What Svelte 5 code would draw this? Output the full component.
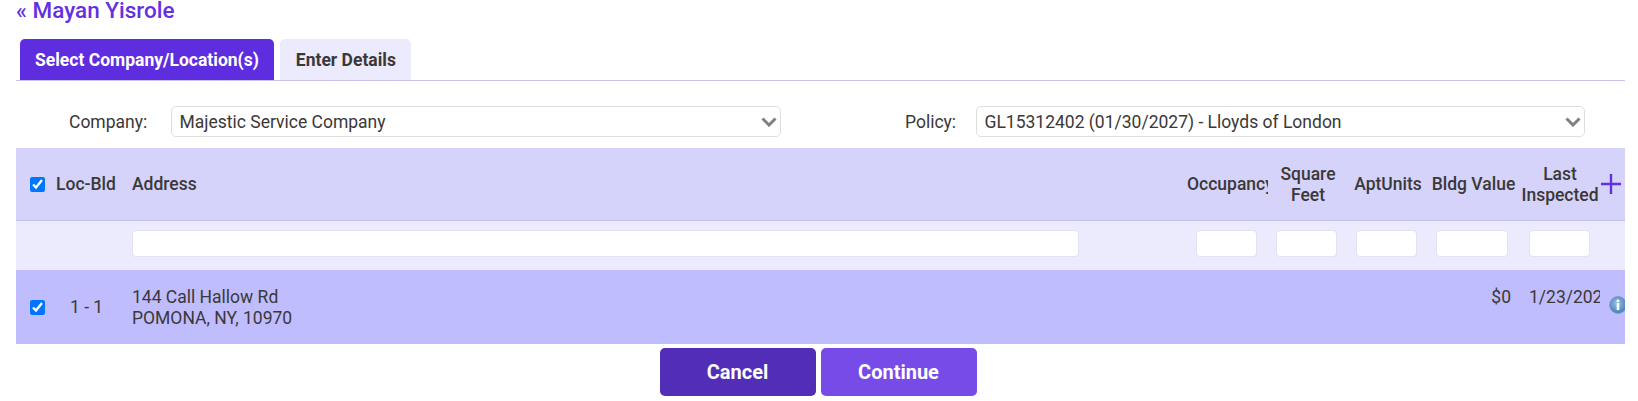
<script>
	const columns = [40, 76, 1055, 81, 80, 80, 88, 84, 25];
	const filters = [
		{ width: 61, left: 9 },
		{ width: 61, left: 8 },
		{ width: 61, left: 8 },
		{ width: 72, left: 8 },
		{ width: 61, left: 13 }
	];
	const rows = [
		{
			loc: '1 - 1',
			street: '144 Call Hallow Rd',
			city: 'POMONA, NY, 10970',
			value: '$0',
			inspected: '1/23/2025'
		}
	];
</script>

<div class="page">
	<a class="back" href="#back">« Mayan Yisrole</a>

	<div class="tabs">
		<button class="tab active">Select Company/Location(s)</button>
		<button class="tab second">Enter Details</button>
	</div>

	<div class="pickers">
		<label class="company-label" for="company">Company:</label>
		<div class="select-wrap company">
			<select id="company">
				<option>Majestic Service Company</option>
			</select>
			<svg class="chevron" viewBox="0 0 16 10" aria-hidden="true">
				<path d="M1.5 1.5 8 8l6.5-6.5" />
			</svg>
		</div>
		<label class="policy-label" for="policy">Policy:</label>
		<div class="select-wrap policy">
			<select id="policy">
				<option>GL15312402 (01/30/2027) - Lloyds of London</option>
			</select>
			<svg class="chevron" viewBox="0 0 16 10" aria-hidden="true">
				<path d="M1.5 1.5 8 8l6.5-6.5" />
			</svg>
		</div>
	</div>

	<table>
		<colgroup>
			{#each columns as width}
				<col style="width: {width}px" />
			{/each}
		</colgroup>
		<thead>
			<tr class="head">
				<th class="check"><input type="checkbox" checked /></th>
				<th class="loc">Loc-Bld</th>
				<th class="left">Address</th>
				<th class="occupancy"><span>Occupancy</span></th>
				<th>Square Feet</th>
				<th>AptUnits</th>
				<th class="bldg">Bldg Value</th>
				<th class="last"><span>Last Inspected</span></th>
				<th class="add">
					<svg viewBox="0 0 22 22" aria-label="Add">
						<path d="M11 1v20M1 11h20" />
					</svg>
				</th>
			</tr>
			<tr class="filters">
				<td></td>
				<td></td>
				<td><input class="address-filter" type="text" /></td>
				{#each filters as filter}
					<td>
						<input
							type="text"
							style="width: {filter.width}px; margin-left: {filter.left}px"
						/>
					</td>
				{/each}
				<td></td>
			</tr>
		</thead>
		<tbody>
			{#each rows as row}
				<tr class="row">
					<td class="check"><input type="checkbox" checked /></td>
					<td class="loc-value">{row.loc}</td>
					<td class="address">{row.street}<br />{row.city}</td>
					<td></td>
					<td></td>
					<td></td>
					<td class="value">{row.value}</td>
					<td class="inspected"><span>{row.inspected}</span></td>
					<td class="info">
						<svg viewBox="0 0 18 18" aria-label="Info">
							<defs>
								<radialGradient id="info-fill" cx="45%" cy="40%" r="65%">
									<stop offset="0%" stop-color="#9fc3e0" />
									<stop offset="70%" stop-color="#5a90c0" />
									<stop offset="100%" stop-color="#447aae" />
								</radialGradient>
							</defs>
							<circle cx="9" cy="9" r="8.4" fill="url(#info-fill)" stroke="#6f97c0" stroke-width="0.8" />
							<rect x="7.7" y="3.6" width="2.6" height="2.4" rx="0.6" fill="#fff" />
							<rect x="7.7" y="7" width="2.6" height="7" rx="0.6" fill="#fff" />
						</svg>
					</td>
				</tr>
			{/each}
		</tbody>
	</table>

	<div class="actions">
		<button class="cancel">Cancel</button>
		<button class="continue">Continue</button>
	</div>
</div>

<style>
	:global(body) {
		background: #fff;
		overflow: hidden;
	}

	.page {
		height: 401px;
		padding: 0 13px 0 16px;
		box-sizing: border-box;
		font-family: Roboto, 'Liberation Sans', sans-serif;
		font-size: 17.5px;
		color: #3b3838;
		overflow: hidden;
	}

	.back {
		display: block;
		height: 38px;
		margin-top: -6px;
		font-size: 22.5px;
		font-weight: 500;
		line-height: 32px;
		color: #6430e4;
		text-decoration: none;
	}

	.tabs {
		display: flex;
		gap: 6px;
		padding-left: 4px;
		height: 41px;
		border-bottom: 1px solid #c5bfee;
		margin-top: 7px;
	}

	.tab {
		padding: 0 15px;
		border: 0;
		border-radius: 5px 5px 0 0;
		background: #ecebfd;
		font: 700 17.5px Roboto, sans-serif;
		color: #3b3838;
	}

	.tab.second {
		padding: 0 15.5px 0 16px;
	}

	.tab.active {
		background: #5f2de0;
		color: #fff;
	}

	.pickers {
		display: flex;
		align-items: center;
		height: 31px;
		margin-top: 25px;
	}

	.company-label {
		margin-left: 53px;
		width: 102px;
	}

	.policy-label {
		margin-left: 124px;
		width: 71px;
	}

	.select-wrap {
		position: relative;
		height: 31px;
	}

	.select-wrap.company {
		width: 610px;
	}

	.select-wrap.policy {
		width: 609px;
	}

	select {
		width: 100%;
		height: 100%;
		padding: 0 7.5px;
		box-sizing: border-box;
		appearance: none;
		background: #fff;
		border: 1px solid #dedede;
		border-radius: 5px;
		font: 17.5px Roboto, sans-serif;
		color: #3b3838;
	}

	.chevron {
		position: absolute;
		right: 4px;
		top: 11px;
		width: 16px;
		height: 10px;
		fill: none;
		stroke: #808080;
		stroke-width: 3;
		pointer-events: none;
	}

	table {
		width: 1609px;
		margin-top: 11px;
		table-layout: fixed;
		border-collapse: collapse;
	}

	th,
	td {
		padding: 0;
		overflow: hidden;
	}

	.head {
		height: 72px;
		background: #d5d3fa;
		border-bottom: 1px solid #c5c2ec;
		line-height: 21px;
	}

	th {
		padding-top: 2px;
		font-weight: 500;
		text-align: center;
	}

	th.left {
		text-align: left;
	}

	th.loc {
		white-space: nowrap;
		text-align: left;
	}

	.check {
		text-align: left;
		padding-left: 14px;
	}

	th.add {
		padding-top: 0;
	}

	.check input {
		display: block;
		width: 15px;
		height: 15px;
		margin: 0;
	}

	th.occupancy {
		text-align: left;
		white-space: nowrap;
	}

	th.bldg {
		padding-left: 3px;
		white-space: nowrap;
	}

	th.last span {
		display: block;
		width: 88px;
	}

	th.add svg {
		display: block;
		width: 22px;
		height: 22px;
		fill: none;
		stroke: #6430e4;
		stroke-width: 2.4;
	}

	.filters {
		height: 50px;
		background: #ecebfd;
	}

	.filters td {
		padding-bottom: 4px;
	}

	.filters input {
		display: block;
		height: 27px;
		padding: 0;
		box-sizing: border-box;
		background: #fff;
		border: 1px solid #e2e1f5;
		border-radius: 4px;
	}

	.filters .address-filter {
		width: 947px;
	}

	.row {
		height: 74px;
		background: #c0bdfe;
		line-height: 21px;
	}

	.loc-value {
		padding-left: 14px;
		white-space: nowrap;
	}

	.address {
		padding-top: 2px;
	}

	.value {
		text-align: right;
		padding: 0 5px 19px 0;
	}

	.inspected {
		padding: 0 0 19px 13px;
		white-space: nowrap;
	}

	.info {
		vertical-align: top;
		padding: 26px 0 0 9px;
	}

	.info svg {
		display: block;
		width: 18px;
		height: 18px;
		max-width: none;
	}

	.actions {
		display: flex;
		justify-content: center;
		gap: 5px;
		margin-top: 4px;
		padding-right: 5px;
	}

	.actions button {
		width: 156px;
		height: 48px;
		border: 0;
		border-radius: 5px;
		font: 700 20px Roboto, sans-serif;
		color: #fff;
	}

	.cancel {
		background: #512db8;
	}

	.continue {
		background: #764be8;
	}
</style>
